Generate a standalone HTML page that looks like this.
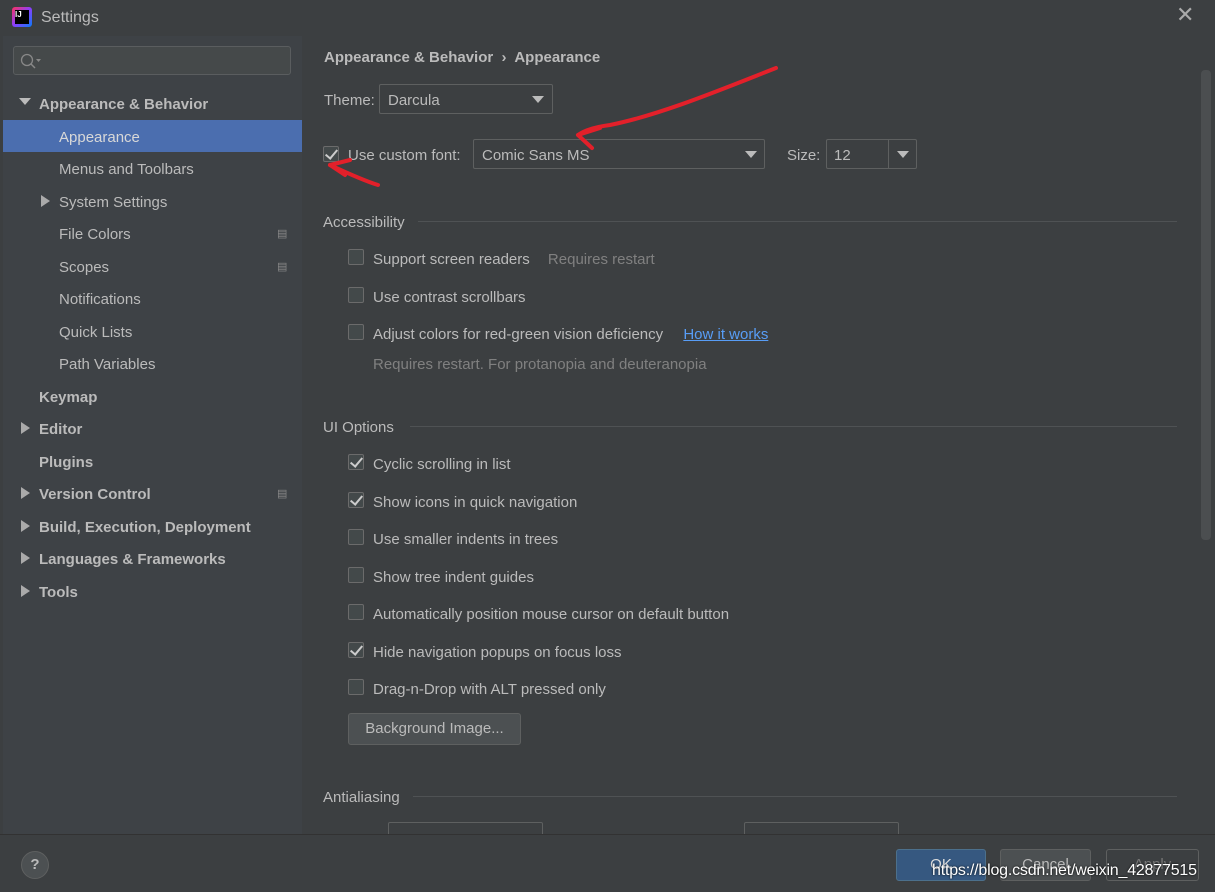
<!DOCTYPE html>
<html><head><meta charset="utf-8"><style>
body{margin:0;width:1215px;height:891px;background:#3c3f41;font-family:"Liberation Sans",sans-serif;color:#bbbbbb;font-size:15px;position:relative;overflow:hidden}
.a{position:absolute;white-space:nowrap}
.side{position:absolute;left:3px;top:36px;width:299px;height:798px;background:#3e4246}
.cb{position:absolute;width:16px;height:16px;border:1px solid #6b6b6b;background:#43494a;border-radius:2px;box-sizing:border-box}
.cb.on::after{content:"";position:absolute;left:4px;top:0px;width:5px;height:10px;border:solid #ccc;border-width:0 2px 2px 0;transform:rotate(40deg)}
.sep{position:absolute;height:1px;background:#4f5254}
.combo{position:absolute;border:1px solid #5e6060;background:#3c3f41;box-sizing:border-box;border-radius:2px}
.tri{position:absolute;width:0;height:0;border-left:6px solid transparent;border-right:6px solid transparent;border-top:7px solid #bbb}
.rt{position:absolute;width:0;height:0;border-top:6px solid transparent;border-bottom:6px solid transparent;border-left:9px solid #aaa}
.btn{position:absolute;height:32px;border:1px solid #5e6060;background:#4c5052;border-radius:3px;box-sizing:border-box;text-align:center;line-height:30px}
.b{font-weight:bold}
.t{margin-top:1px}
</style></head><body>
<div class="a" style="left:12px;top:7px;width:20px;height:20px;background:linear-gradient(135deg,#fe315d,#8a3ffc,#087cfa);border-radius:3px"></div>
<div class="a" style="left:15px;top:10px;width:14px;height:14px;background:#000;color:#fff;font-size:8px;font-weight:bold;line-height:10px">IJ</div>
<div class="a" style="left:41px;top:9px;font-size:16px">Settings</div>
<div class="a" style="left:1176px;top:2px;font-size:22px;color:#aaa">✕</div>
<div class="side"></div>
<div class="a" style="left:13px;top:46px;width:278px;height:29px;border:1px solid #5a5d5f;background:#45494a;border-radius:3px;box-sizing:border-box"></div>
<svg class="a" style="left:19px;top:53px" width="24" height="18"><circle cx="8" cy="7" r="5.5" stroke="#888" fill="none" stroke-width="1.3"/><line x1="12" y1="11" x2="16" y2="15" stroke="#888" stroke-width="1.5"/><path d="M17 6h5l-2.5 3z" fill="#888"/></svg>
<div class="a" style="left:3px;top:120px;width:299px;height:32px;background:#4b6eaf"></div>
<div class="tri" style="left:19px;top:98px"></div>
<div class="a b" style="left:39px;top:96px">Appearance &amp; Behavior</div>
<div class="a" style="left:59px;top:129px;color:#d8d8d8">Appearance</div>
<div class="a" style="left:59px;top:161px">Menus and Toolbars</div>
<div class="rt" style="left:41px;top:195px"></div>
<div class="a" style="left:59px;top:194px">System Settings</div>
<div class="a" style="left:59px;top:226px">File Colors</div>
<div class="a" style="left:59px;top:259px">Scopes</div>
<div class="a" style="left:59px;top:291px">Notifications</div>
<div class="a" style="left:59px;top:324px">Quick Lists</div>
<div class="a" style="left:59px;top:356px">Path Variables</div>
<div class="a b" style="left:39px;top:389px">Keymap</div>
<div class="rt" style="left:21px;top:422px"></div><div class="a b" style="left:39px;top:421px">Editor</div>
<div class="a b" style="left:39px;top:454px">Plugins</div>
<div class="rt" style="left:21px;top:487px"></div><div class="a b" style="left:39px;top:486px">Version Control</div>
<div class="rt" style="left:21px;top:520px"></div><div class="a b" style="left:39px;top:519px">Build, Execution, Deployment</div>
<div class="rt" style="left:21px;top:552px"></div><div class="a b" style="left:39px;top:551px">Languages &amp; Frameworks</div>
<div class="rt" style="left:21px;top:585px"></div><div class="a b" style="left:39px;top:584px">Tools</div>
<div class="a" style="left:277px;top:227px;font-size:11px;color:#888">▤</div>
<div class="a" style="left:277px;top:260px;font-size:11px;color:#888">▤</div>
<div class="a" style="left:277px;top:487px;font-size:11px;color:#888">▤</div>

<div class="a b" style="left:324px;top:49px">Appearance &amp; Behavior &nbsp;›&nbsp; Appearance</div>
<div class="a" style="left:324px;top:92px">Theme:</div>
<div class="combo" style="left:379px;top:84px;width:174px;height:30px"></div>
<div class="a" style="left:388px;top:92px">Darcula</div><div class="tri" style="left:532px;top:96px"></div>
<div class="cb on" style="left:323px;top:146px"></div>
<div class="a" style="left:348px;top:147px">Use custom font:</div>
<div class="combo" style="left:473px;top:139px;width:292px;height:30px"></div>
<div class="a" style="left:482px;top:147px">Comic Sans MS</div><div class="tri" style="left:745px;top:151px"></div>
<div class="a" style="left:787px;top:147px">Size:</div>
<div class="combo" style="left:826px;top:139px;width:91px;height:30px"></div>
<div class="a" style="left:888px;top:140px;width:1px;height:28px;background:#5e6060"></div>
<div class="a" style="left:834px;top:147px">12</div><div class="tri" style="left:897px;top:151px"></div>

<div class="a" style="left:323px;top:214px">Accessibility</div><div class="sep" style="left:418px;top:221px;width:759px"></div>
<div class="cb" style="left:348px;top:249px"></div><div class="a" style="left:373px;top:251px">Support screen readers <span style="color:#808080;margin-left:14px">Requires restart</span></div>
<div class="cb" style="left:348px;top:287px"></div><div class="a" style="left:373px;top:289px">Use contrast scrollbars</div>
<div class="cb" style="left:348px;top:324px"></div><div class="a" style="left:373px;top:326px">Adjust colors for red-green vision deficiency <span style="color:#589df6;text-decoration:underline;margin-left:16px">How it works</span></div>
<div class="a" style="left:373px;top:356px;color:#808080">Requires restart. For protanopia and deuteranopia</div>

<div class="a" style="left:323px;top:419px">UI Options</div><div class="sep" style="left:410px;top:426px;width:767px"></div>
<div class="cb on" style="left:348px;top:454px"></div><div class="a" style="left:373px;top:456px">Cyclic scrolling in list</div>
<div class="cb on" style="left:348px;top:492px"></div><div class="a" style="left:373px;top:494px">Show icons in quick navigation</div>
<div class="cb" style="left:348px;top:529px"></div><div class="a" style="left:373px;top:531px">Use smaller indents in trees</div>
<div class="cb" style="left:348px;top:567px"></div><div class="a" style="left:373px;top:569px">Show tree indent guides</div>
<div class="cb" style="left:348px;top:604px"></div><div class="a" style="left:373px;top:606px">Automatically position mouse cursor on default button</div>
<div class="cb on" style="left:348px;top:642px"></div><div class="a" style="left:373px;top:644px">Hide navigation popups on focus loss</div>
<div class="cb" style="left:348px;top:679px"></div><div class="a" style="left:373px;top:681px">Drag-n-Drop with ALT pressed only</div>
<div class="btn" style="left:348px;top:713px;width:173px">Background Image...</div>
<div class="a" style="left:323px;top:789px">Antialiasing</div><div class="sep" style="left:413px;top:796px;width:764px"></div>
<div class="combo" style="left:388px;top:822px;width:155px;height:20px"></div>
<div class="combo" style="left:744px;top:822px;width:155px;height:20px"></div>
<div class="a" style="left:1201px;top:70px;width:10px;height:470px;background:#4b4e50;border-radius:4px"></div>

<div class="a" style="left:0;top:834px;width:1215px;height:57px;background:#3c3f41;border-top:1px solid #323232"></div>
<div class="a" style="left:21px;top:851px;width:26px;height:26px;border:1px solid #5e6060;border-radius:50%;background:#4c5052;text-align:center;line-height:26px;font-weight:bold">?</div>
<div class="btn" style="left:896px;top:849px;width:90px;background:#365880;border-color:#4c708c;color:#ddd">OK</div>
<div class="btn" style="left:1000px;top:849px;width:91px">Cancel</div>
<div class="btn" style="left:1106px;top:849px;width:93px;background:#3c3f41;color:#777">Apply</div>
<div class="a" style="left:932px;top:862px;font-size:16px;color:#fff;text-shadow:0 0 2px #000;letter-spacing:-0.2px">https://blog.csdn.net/weixin_42877515</div>

<svg class="a" style="left:0;top:0" width="1215" height="891"><g stroke="#e3202a" stroke-width="4" fill="none" stroke-linecap="round">
<path d="M776 68 C720 90 660 115 610 125 C595 127 585 130 578 135"/><path d="M578 135 L600 128 M578 135 L592 148"/>
<path d="M330 165 C345 172 362 180 378 185"/><path d="M330 165 L350 160 M330 165 L345 175"/></g></svg>
</body></html>
